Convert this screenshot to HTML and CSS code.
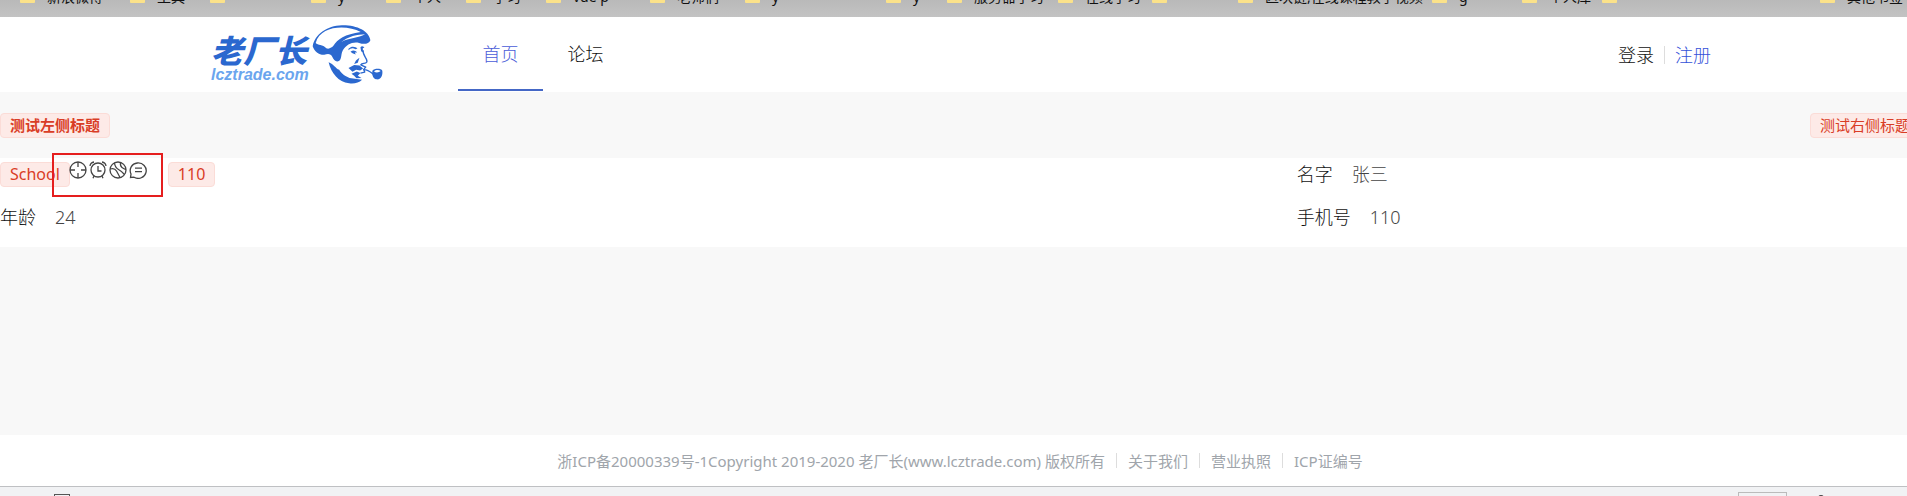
FILE: index.html
```html
<!DOCTYPE html>
<html lang="zh-CN">
<head>
<meta charset="utf-8">
<title>老厂长</title>
<link rel="stylesheet" href="styles.css">
</head>
<body>
<div class="bookmarks">
  <span class="mark" style="left:20px">新浪微博</span>
  <span class="mark" style="left:130px">工具</span>
  <span class="mark" style="left:210px"></span>
  <span class="mark" style="left:311px">y</span>
  <span class="mark" style="left:386px">个人</span>
  <span class="mark" style="left:466px">学习</span>
  <span class="mark" style="left:546px">vue p</span>
  <span class="mark" style="left:650px">老师们</span>
  <span class="mark" style="left:745px">y</span>
  <span class="mark" style="left:886px">y</span>
  <span class="mark" style="left:947px">服务器学习</span>
  <span class="mark" style="left:1058px">在线学习</span>
  <span class="mark" style="left:1152px"></span>
  <span class="mark" style="left:1238px">区块链,在线课程教学视频</span>
  <span class="mark" style="left:1432px">g</span>
  <span class="mark" style="left:1522px">个人库</span>
  <span class="mark" style="left:1602px"></span>
  <span class="mark" style="left:1820px">其他书签</span>
</div>
<header class="header">
  <a class="logo" href="#" aria-label="老厂长">
    <span class="logo-words">
      <span class="logo-name">老厂长</span>
      <span class="logo-domain">lcztrade.com</span>
    </span>
    <svg class="logo-face" viewBox="320 10 220 190" aria-hidden="true">
      <path fill="#2b68cf" fill-rule="evenodd" d="M322 80C328 45 365 18 410 17C455 16 492 34 496 62C491 74 476 75 462 70C440 66 424 76 413 92C407 103 410 117 402 124C393 130 385 122 381 112C377 102 367 102 357 106C342 107 327 96 322 80ZM331 70C337 77 353 74 363 86C371 90 380 84 385 78C395 60 420 43 467 37C424 15 346 17 331 70ZM408 68C432 53 460 57 480 44C458 45 428 50 408 68Z"/>
      <path fill="#2b68cf" d="M370 128C383 132 391 146 402 151C407 162 422 171 433 176L471 181C461 190 449 194 432 192C399 187 378 161 370 128Z"/>
      <path fill="#2b68cf" d="M430 88C439 78 451 81 457 87L451 89C442 83 435 87 430 92ZM436 97C443 91 450 92 456 99L449 99L452 105L442 101ZM466 83C470 77 477 81 478 84L473 86L474 99L468 95ZM455 121L463 115L458 130L447 134L452 124ZM430 146L447 137L463 138L474 147L465 153L453 151L442 157ZM439 163L455 156L466 161L458 169L469 176L454 177L447 169Z"/>
      <path fill="none" stroke="#2b68cf" stroke-width="4" stroke-linejoin="round" d="M474 92C472 110 490 119 485 128C481 134 471 130 467 136L482 143L476 150L479 158L466 161M474 151C492 148 500 164 514 171"/>
      <path fill="#2b68cf" fill-rule="evenodd" d="M502 154C508 146 529 146 532 154C534 171 526 181 516 180C506 179 500 171 502 154ZM507 156C512 161 522 160 527 155C522 151 512 151 507 156Z"/>
    </svg>
  </a>
  <nav class="nav">
    <a class="nav-item active" href="#">首页</a>
    <a class="nav-item" href="#">论坛</a>
  </nav>
  <div class="account">
    <a href="#">登录</a>
    <a class="register" href="#">注册</a>
  </div>
</header>
<main class="main">
  <div class="title-row">
    <span class="tag tag-bold">测试左侧标题</span>
    <span class="tag">测试右侧标题</span>
  </div>
  <section class="panel">
    <div class="cell tags">
      <span class="tag tag-large">School</span>
      <span class="icons">
        <svg viewBox="0 0 18 18"><circle cx="9" cy="9" r="8"/><path d="M9 1v5M9 12v5M1 9h5M12 9h5"/></svg>
        <svg viewBox="0 0 18 18"><circle cx="9" cy="9" r="7"/><path d="M9 5v5h3.500M5 15l-1 2.200M13 15l1 2.200M1 5Q1.500 1.500 5 1M17 5Q16.500 1.500 13 1"/></svg>
        <svg viewBox="0 0 18 18"><circle cx="9" cy="9" r="8"/><path d="M5.500 2Q6 6.500 9.500 8.500T15.500 13.500M1.200 8Q5.500 6.500 7.500 10T11 16.500M11.500 1.500Q11 5 13 6.500T17 8.500"/></svg>
        <svg viewBox="0 0 18 18"><path d="M1.500 16.500L2 13A8 7.700 0 1 1 5 16.200ZM6 7.200h7M6 10.700h7"/></svg>
      </span>
      <span class="tag tag-large">110</span>
      <span class="highlight"></span>
    </div>
    <div class="cell"><span>名字</span><span class="value">张三</span></div>
    <div class="cell"><span>年龄</span><span class="value">24</span></div>
    <div class="cell"><span>手机号</span><span class="value">110</span></div>
  </section>
</main>
<footer class="footer">
  <span class="foot-item">浙ICP备20000339号-1Copyright 2019-2020 老厂长(www.lcztrade.com) 版权所有</span>
  <a class="foot-item" href="#">关于我们</a>
  <a class="foot-item" href="#">营业执照</a>
  <a class="foot-item" href="#">ICP证编号</a>
</footer>
<div class="statusbar">
  <span class="status-square"></span>
  <span class="status-box"></span>
  <span class="status-dot"></span>
</div>
</body>
</html>
```
FILE: styles.css
```css
* { box-sizing: border-box; }
body {
  margin: 0;
  min-height: 100vh;
  display: flex;
  flex-direction: column;
  overflow: hidden;
  background: #f8f8f8;
  color: #111;
  font: 300 18px/24px "Noto Sans", "Noto Sans CJK SC", sans-serif;
}
a { color: inherit; text-decoration: none; }

.bookmarks {
  position: relative;
  height: 17px;
  overflow: hidden;
  background: linear-gradient(#b9b9b9, #c3c3c3);
}
.mark {
  position: absolute;
  top: -12px;
  padding-left: 27px;
  font-size: 14px;
  font-weight: 400;
  line-height: 18px;
  height: 18px;
  white-space: nowrap;
}
.mark::before {
  content: "";
  position: absolute;
  left: 0;
  bottom: 3px;
  width: 15px;
  height: 12px;
  border-radius: 1px;
  background: #fbe28a;
}

.header {
  display: flex;
  height: 75px;
  padding: 0 196px 0 211px;
  background: #fff;
}
.logo { display: flex; padding-top: 6px; }
.logo-words {
  display: flex;
  flex-direction: column;
  padding-top: 9px;
  width: 101px;
  white-space: nowrap;
}
.logo-name {
  color: #2b68cf;
  font: italic 900 32px/34px "Noto Sans CJK SC", sans-serif;
}
.logo-domain {
  margin-top: 1px;
  color: #6ba5ee;
  font: italic 700 16px/16px "Liberation Sans", sans-serif;
}
.logo-face { width: 73px; height: 63px; }
.nav { display: flex; margin-left: 73px; }
.nav-item {
  width: 85px;
  height: 74px;
  text-align: center;
  line-height: 74px;
  border-bottom: 2px solid transparent;
}
.nav-item.active { color: #4a5cd8; border-color: #4467c6; }
.account { display: flex; align-items: center; margin-left: auto; }
.register {
  margin-left: 10px;
  color: #3452d9;
  display: flex;
  align-items: center;
}
.register::before {
  content: "";
  height: 18px;
  margin-right: 10px;
  border-left: 1px solid #ddd;
}

.main { flex: 1; }
.title-row {
  display: flex;
  justify-content: space-between;
  height: 66px;
  padding-top: 21px;
  margin-right: -13px;
}
.tag {
  height: 25px;
  padding: 0 9px;
  border: 1px solid #fbdcd7;
  border-radius: 4px;
  background: #fdeae7;
  color: #d93d26;
  font-size: 15px;
  font-weight: 400;
  line-height: 23px;
  white-space: nowrap;
}
.tag-bold { font-weight: 700; }
.tag-large { font-size: 16px; margin-top: 2px; }
.panel {
  display: grid;
  grid-template-columns: 68fr 32fr;
  row-gap: 12px;
  height: 89px;
  align-content: start;
  background: #fff;
}
.cell { display: flex; height: 31px; align-items: center; gap: 19px; }
.value { color: #444; }
.tags { position: relative; gap: 0; }
.icons { display: flex; gap: 2px; margin: 0 21px 7px -1px; }
.icons svg {
  width: 18px;
  height: 18px;
  fill: none;
  stroke: #444;
  stroke-width: 1.3;
}
.highlight {
  position: absolute;
  left: 52px;
  top: -5px;
  width: 111px;
  height: 44px;
  border: 2px solid #e51e1e;
}

.footer {
  display: flex;
  justify-content: center;
  align-items: center;
  height: 51px;
  padding-left: 13px;
  background: #fff;
  color: #a0a5ab;
  font-size: 15px;
  font-weight: 400;
}
.foot-item { display: flex; align-items: center; white-space: nowrap; }
.foot-item + .foot-item::before {
  content: "";
  height: 15px;
  margin: 0 11px;
  border-left: 1px solid #ddd;
}

.statusbar {
  position: relative;
  height: 10px;
  overflow: hidden;
  border-top: 1px solid #bfc0c3;
  background: #f1f2f4;
}
.status-square, .status-box, .status-dot { position: absolute; }
.status-square { left: 54px; top: 7px; width: 16px; height: 14px; border: 1px solid #555; }
.status-box { left: 1738px; top: 5px; width: 49px; height: 14px; border: 1px solid #bbb; }
.status-dot { left: 1818px; top: 8px; width: 6px; height: 6px; border-radius: 3px; background: #444; }
```
